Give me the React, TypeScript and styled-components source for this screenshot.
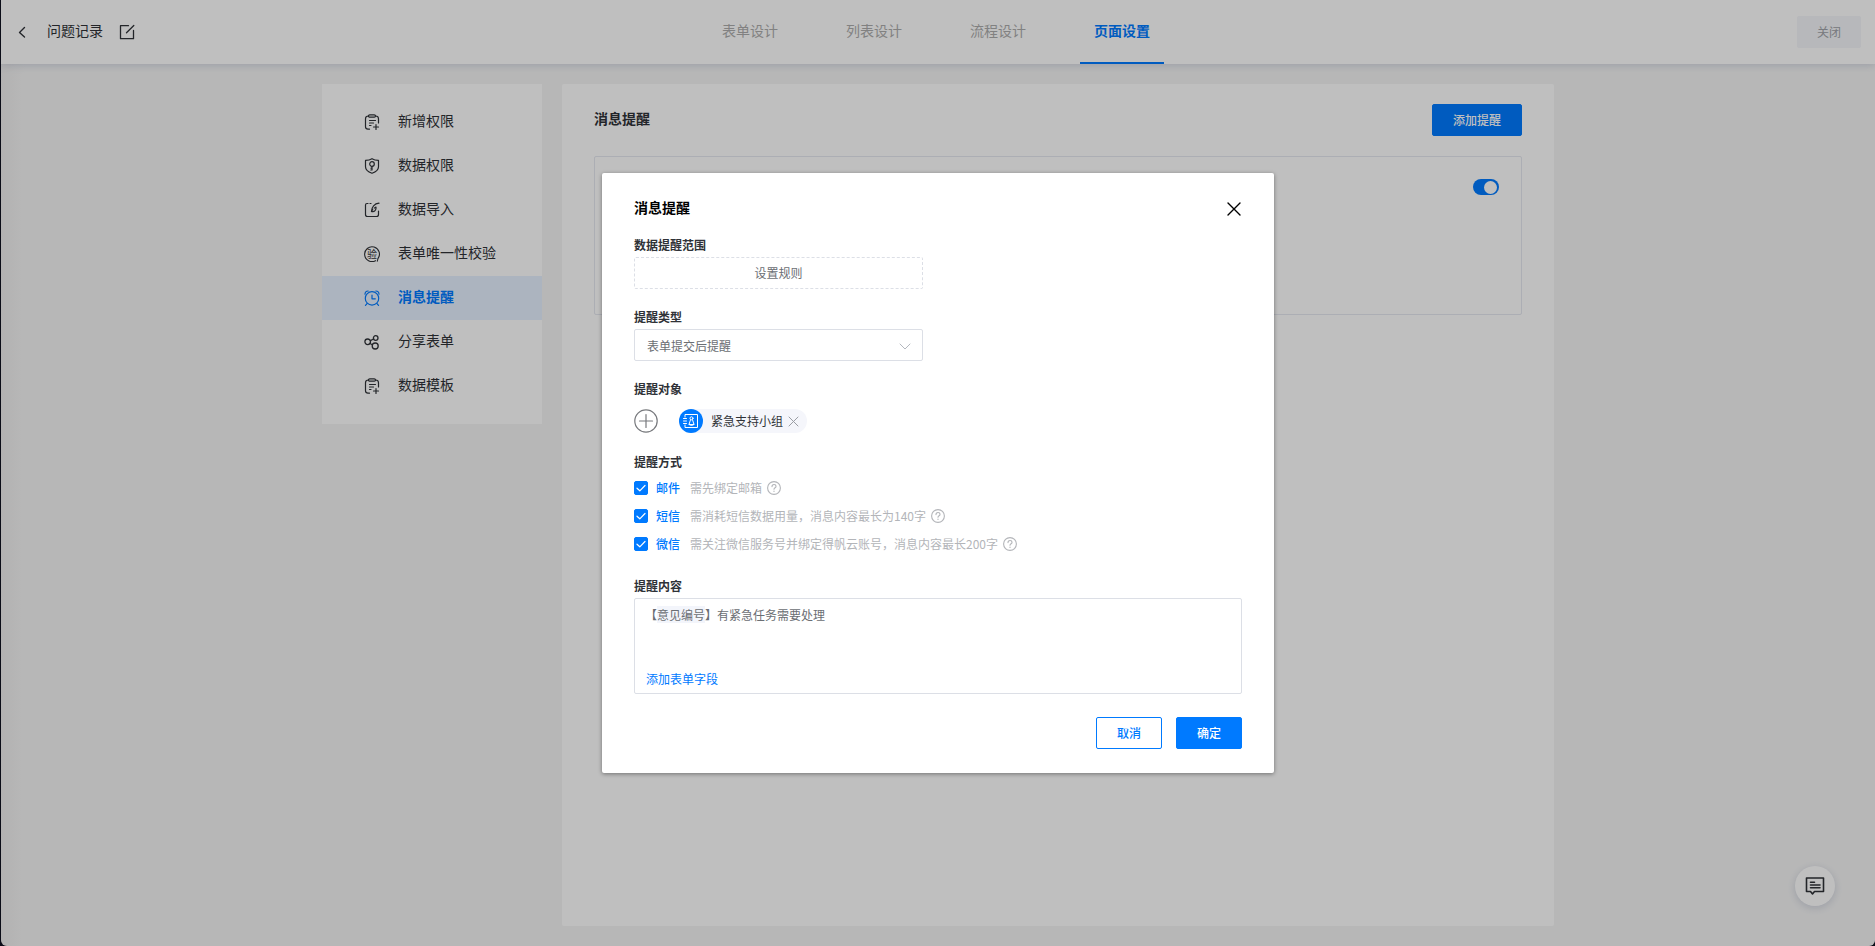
import React, { useState } from "react";
import styled, { createGlobalStyle, css } from "styled-components";

const GlobalStyle = createGlobalStyle`
  *, *::before, *::after { box-sizing: border-box; }
  body {
    margin: 0;
    background: #0b0d18;
    font-family: "Noto Sans CJK SC", sans-serif;
    font-size: 14px;
    color: #2f3237;
  }
  button, input, select { font-family: inherit; margin: 0; }
  h1, h2, h3, p { margin: 0; font-size: inherit; font-weight: inherit; }
`;

const blue = "#007aff";
const line = "#dcdfe6";

const Shell = styled.div`
  position: relative;
  display: flex;
  flex-direction: column;
  min-height: 100vh;
  margin-left: 1px;
  overflow: hidden;
  border-radius: 0 0 6px 6px;
  background: linear-gradient(90deg, #efeeee, #f5f5f5 24px);
`;

const Header = styled.header`
  display: grid;
  grid-template-columns: 1fr auto 1fr;
  height: 64px;
  padding: 0 14px 0 10px;
  background: #fff;
  box-shadow: 0 1px 8px rgba(60, 80, 130, 0.22);
`;

const HeaderLeft = styled.div`
  display: flex;
  align-items: center;
`;

const HeaderRight = styled(HeaderLeft)`
  justify-content: flex-end;
`;

const IconButton = styled.button<{ $size?: number }>`
  display: flex;
  align-items: center;
  justify-content: center;
  width: ${(p) => p.$size ?? 22}px;
  height: ${(p) => p.$size ?? 22}px;
  padding: 0;
  border: 0;
  background: none;
  color: inherit;
  cursor: pointer;
`;

const PageName = styled.h1`
  margin: 0 13px 0 14px;
  padding-bottom: 4px;
  line-height: 20px;
`;

const Tabs = styled.nav`
  display: flex;
  gap: 40px;
`;

const Tab = styled.a<{ $active?: boolean }>`
  display: flex;
  align-items: center;
  padding: 0 14px 2px;
  border-bottom: 2px solid ${(p) => (p.$active ? blue : "transparent")};
  color: ${(p) => (p.$active ? blue : "#adadad")};
  font-weight: ${(p) => (p.$active ? 700 : 400)};
  line-height: 20px;
  text-decoration: none;
`;

const Button = styled.button<{ $kind?: "primary" | "outline" | "muted"; $width: number }>`
  width: ${(p) => p.$width}px;
  height: 32px;
  padding: 0;
  border: 1px solid ${blue};
  border-radius: 2px;
  background: ${blue};
  color: #fff;
  font-size: 12px;
  font-weight: 500;
  line-height: 20px;
  cursor: pointer;
  ${(p) => p.$kind === "outline" && css`background: #fff; color: ${blue};`}
  ${(p) =>
    p.$kind === "muted" &&
    css`background: #f4f6fa; border-color: #f4f6fa; color: #a0a3a8; font-weight: 400;`}
`;

const Body = styled.div`
  flex: 1;
  display: flex;
  align-items: flex-start;
  gap: 20px;
  width: 100%;
  max-width: 1232px;
  margin: 0 auto;
  padding: 20px 0;
`;

const SideMenu = styled.nav`
  flex: none;
  width: 220px;
  padding: 16px 0;
  background: #fff;
`;

const SideItem = styled.a<{ $active?: boolean }>`
  display: flex;
  align-items: center;
  gap: 18px;
  height: 44px;
  padding-left: 42px;
  background: ${(p) => (p.$active ? "#e6f1ff" : "transparent")};
  color: ${(p) => (p.$active ? blue : "inherit")};
  font-weight: ${(p) => (p.$active ? 700 : 400)};
  text-decoration: none;
`;

const SideLabel = styled.span`
  padding-bottom: 4px;
  line-height: 20px;
`;

const Main = styled.main`
  flex: 1;
  align-self: stretch;
  padding: 20px 32px;
  border-radius: 2px;
  background: #fff;
`;

const MainHead = styled.div`
  display: flex;
  align-items: center;
  justify-content: space-between;
  margin-bottom: 20px;
`;

const MainTitle = styled.h2`
  padding-bottom: 4px;
  font-weight: 700;
  line-height: 20px;
`;

const ReminderCard = styled.section`
  display: flex;
  align-items: flex-start;
  justify-content: flex-end;
  height: 159px;
  padding: 22px;
  border: 1px solid #e6e8f0;
  border-radius: 2px;
`;

const Switch = styled.input`
  appearance: none;
  display: flex;
  align-items: center;
  width: 26px;
  height: 16px;
  padding: 0 2px;
  border-radius: 8px;
  background: #c4c7cc;
  cursor: pointer;
  &::before {
    content: "";
    width: 13px;
    height: 13px;
    border-radius: 50%;
    background: #fff;
  }
  &:checked { justify-content: flex-end; background: ${blue}; }
`;

const ChatButton = styled.button`
  position: absolute;
  right: 40px;
  bottom: 40px;
  display: flex;
  align-items: center;
  justify-content: center;
  width: 40px;
  height: 40px;
  padding: 0;
  border: 0;
  border-radius: 50%;
  background: #fff;
  box-shadow: 0 2px 8px rgba(60, 80, 130, 0.2);
  color: inherit;
`;

const Overlay = styled.div`
  position: absolute;
  inset: 0;
  display: flex;
  align-items: center;
  justify-content: center;
  background: rgba(0, 0, 0, 0.25);
`;

const Dialog = styled.form`
  width: 672px;
  padding: 24px 32px;
  border-radius: 2px;
  background: #fff;
  box-shadow: 0 1px 4px rgba(0, 0, 0, 0.4);
  font-size: 12px;
  line-height: 20px;
`;

const DialogHead = styled.div`
  display: flex;
  align-items: center;
  justify-content: space-between;
  height: 24px;
  margin-bottom: 14px;
  color: #000;
`;

const DialogTitle = styled.h2`
  padding-bottom: 4px;
  font-size: 14px;
  font-weight: 700;
  line-height: 20px;
`;

const Fields = styled.div`
  display: flex;
  flex-direction: column;
  gap: 18px;
`;

const Field = styled.div`
  display: flex;
  flex-direction: column;
  align-items: flex-start;
  gap: 2px;
`;

const FieldLabel = styled.label`
  font-weight: 700;
`;

const RuleButton = styled.button`
  width: 289px;
  height: 32px;
  padding: 0 0 2px;
  border: 1px dashed ${line};
  border-radius: 2px;
  background: #fff;
  color: #6b6e73;
  font-size: 12px;
  cursor: pointer;
`;

const SelectBox = styled.div`
  display: grid;
  align-items: center;
  width: 289px;
  height: 32px;
  > * { grid-area: 1 / 1; }
  > svg { justify-self: end; margin: 2px 12px 0 0; color: #b4b8bf; pointer-events: none; }
`;

const Select = styled.select`
  appearance: none;
  width: 100%;
  height: 32px;
  padding: 0 32px 0 12px;
  border: 1px solid ${line};
  border-radius: 2px;
  background: #fff;
  color: #6b6e73;
  font-size: 12px;
`;

const Targets = styled.div`
  display: flex;
  align-items: center;
  gap: 21px;
  padding: 8px 0 1px;
  color: #77797d;
`;

const Chip = styled.span`
  display: flex;
  align-items: center;
  gap: 5px;
  height: 24px;
  padding-right: 8px;
  border-radius: 12px;
  background: #f5f6fb;
  color: #2f3237;
  ${IconButton} { color: #9a9da3; }
`;

const Avatar = styled.span`
  display: flex;
  width: 24px;
  height: 24px;
  margin-right: 3px;
  border-radius: 50%;
  background: ${blue};
  color: #fff;
`;

const ChannelList = styled.div`
  display: flex;
  flex-direction: column;
`;

const Channel = styled.div`
  display: flex;
  align-items: center;
  height: 28px;
  color: #b3b5b9;
`;

const ChannelLabel = styled.label`
  display: flex;
  align-items: center;
  margin-right: 10px;
  color: ${blue};
  font-weight: 500;
`;

const CheckWrap = styled.span`
  display: grid;
  margin-right: 8px;
  > * { grid-area: 1 / 1; }
  > svg { color: #fff; pointer-events: none; }
`;

const Check = styled.input`
  appearance: none;
  width: 14px;
  height: 14px;
  border: 1px solid ${line};
  border-radius: 2px;
  background: #fff;
  &:checked { border-color: ${blue}; background: ${blue}; }
`;

const ChannelHint = styled.span`
  margin-right: 5px;
`;

const MessageBox = styled.div`
  display: flex;
  flex-direction: column;
  align-items: flex-start;
  justify-content: space-between;
  width: 100%;
  height: 96px;
  padding: 6px 10px 4px;
  border: 1px solid ${line};
  border-radius: 2px;
  color: #6b6e73;
`;

const Message = styled.div`
  width: 100%;
  outline: none;
`;

const FieldToken = styled.span`
  background: #f3f5fb;
`;

const TextLink = styled.a`
  padding-left: 1px;
  color: ${blue};
  text-decoration: none;
`;

const DialogFoot = styled.div`
  display: flex;
  justify-content: flex-end;
  gap: 14px;
  margin-top: 23px;
`;

const Svg = ({ size = 16, w = 1, children }: { size?: number; w?: number; children: React.ReactNode }) => (
  <svg width={size} height={size} viewBox={`0 0 ${size} ${size}`} fill="none" stroke="currentColor"
    strokeWidth={w} strokeLinecap="round" strokeLinejoin="round" aria-hidden="true">
    {children}
  </svg>
);

const ClipboardIcon = () => (
  <Svg w={1.2}>
    <path d="M4.5 2C2.5 2 1.5 3 1.5 4.8v8c0 1.6 1 2.4 2.5 2.4h1.500M11.500 2c2 0 3 1 3 2.800V9" />
    <rect x="4.5" y="0.8" width="7" height="2.4" rx="1.2" />
    <path d="M5.5 6.5h6M5.500 9h4M5.500 11.500h1.500M9.500 13h5M12 10.500v5" />
  </Svg>
);
const ShieldIcon = () => (
  <Svg w={1.2}>
    <path d="M8 .7c2 1.300 4.200 1.700 6.500 1.700v6.300c0 3.200-2.700 5.200-6.500 6.600-3.800-1.400-6.500-3.400-6.500-6.600V2.400C3.800 2.400 6 2 8 .7z" />
    <circle cx="8" cy="6" r="2.3" />
    <path d="M8 8.300V12M8 12H6.800M8 10.200H7" />
  </Svg>
);
const ImportIcon = () => (
  <Svg w={1.2}>
    <path d="M4 1.500H3Q1.500 1.500 1.500 3v9.500Q1.500 14.500 3.500 14.500h9Q14.500 14.500 14.500 12.500V9M6 1.500h1" />
    <path d="M15 1.200C10.500 1.500 7.500 5 7.500 9.500c3 .8 5-1.500 4.500-4.500l-1.500 1" />
    <path d="M7.500 9.500l1.300-2.500" />
  </Svg>
);
const VerifyIcon = () => (
  <Svg w={1.1}>
    <path d="M13.800 12.800A7.400 7.400 0 1 0 11.500 14.700M13.300 15.200l.6-2.400" />
    <text x="8" y="11.500" textAnchor="middle" fontSize="10" fill="currentColor" stroke="none">验</text>
  </Svg>
);
const AlarmIcon = () => (
  <Svg w={1.2}>
    <circle cx="8" cy="8.400" r="6.700" />
    <path d="M8 5v3.800h3.300M1 4.200Q1 1 4.200 1M15 4.200Q15 1 11.800 1M3 13.600l-1.500 1.800M13 13.600l1.500 1.800" />
  </Svg>
);
const ShareIcon = () => (
  <Svg w={1.3}>
    <circle cx="3.700" cy="7.800" r="2.800" />
    <circle cx="11.700" cy="4" r="2.300" />
    <circle cx="11.200" cy="12" r="3" />
    <path d="M6.300 6.700L9.600 5M6 9.500l2.400 1.300" />
  </Svg>
);
const HelpIcon = () => (
  <Svg size={14} w={1.1}>
    <circle cx="7" cy="7" r="6.400" />
    <path d="M5 5.600C5 4.300 5.900 3.500 7 3.500s2 .8 2 1.900C9 6.700 7 6.800 7 8.300M7 10v.4" />
  </Svg>
);

const menu = [
  { name: "新增权限", Icon: ClipboardIcon },
  { name: "数据权限", Icon: ShieldIcon },
  { name: "数据导入", Icon: ImportIcon },
  { name: "表单唯一性校验", Icon: VerifyIcon },
  { name: "消息提醒", Icon: AlarmIcon },
  { name: "分享表单", Icon: ShareIcon },
  { name: "数据模板", Icon: ClipboardIcon },
];

const channels = [
  { id: "mail", name: "邮件", hint: "需先绑定邮箱" },
  { id: "sms", name: "短信", hint: "需消耗短信数据用量，消息内容最长为140字" },
  { id: "wechat", name: "微信", hint: "需关注微信服务号并绑定得帆云账号，消息内容最长200字" },
];

const tabs = ["表单设计", "列表设计", "流程设计", "页面设置"];

export default function App() {
  const [on, setOn] = useState<Record<string, boolean>>({ mail: true, sms: true, wechat: true });

  return (
    <>
      <GlobalStyle />
      <Shell>
        <Header>
          <HeaderLeft>
            <IconButton type="button" aria-label="返回">
              <Svg size={12} w={1.4}><path d="M8.500 1.500L3.500 6.500l5 4.500" /></Svg>
            </IconButton>
            <PageName>问题记录</PageName>
            <IconButton type="button" aria-label="编辑">
              <Svg w={1.3}><path d="M9.500 1.700H1.500v13h13V6.500M7.500 8.800L14.800 1.500" /></Svg>
            </IconButton>
          </HeaderLeft>
          <Tabs>
            {tabs.map((t, i) => <Tab key={t} href="#" $active={i === 3}>{t}</Tab>)}
          </Tabs>
          <HeaderRight>
            <Button type="button" $kind="muted" $width={64}>关闭</Button>
          </HeaderRight>
        </Header>

        <Body>
          <SideMenu>
            {menu.map(({ name, Icon }) => (
              <SideItem key={name} href="#" $active={name === "消息提醒"}>
                <Icon />
                <SideLabel>{name}</SideLabel>
              </SideItem>
            ))}
          </SideMenu>
          <Main>
            <MainHead>
              <MainTitle>消息提醒</MainTitle>
              <Button type="button" $width={90}>添加提醒</Button>
            </MainHead>
            <ReminderCard>
              <Switch type="checkbox" role="switch" aria-label="启用提醒" defaultChecked />
            </ReminderCard>
          </Main>
        </Body>

        <ChatButton type="button" aria-label="反馈">
          <Svg size={20} w={1.6}>
            <path d="M1.500 2h17v13.500H9.500L7.500 18l-2-2.500h-4z" />
            <path d="M5.500 6.200h4M5.500 9h9.500M5.500 11.800h9.500" />
          </Svg>
        </ChatButton>

        <Overlay>
          <Dialog role="dialog" aria-labelledby="dialog-title" onSubmit={(e) => e.preventDefault()}>
            <DialogHead>
              <DialogTitle id="dialog-title">消息提醒</DialogTitle>
              <IconButton type="button" aria-label="关闭窗口" $size={16}>
                <Svg w={1.4}><path d="M2 2l12 12M14 2L2 14" /></Svg>
              </IconButton>
            </DialogHead>
            <Fields>
              <Field>
                <FieldLabel htmlFor="rule">数据提醒范围</FieldLabel>
                <RuleButton id="rule" type="button">设置规则</RuleButton>
              </Field>
              <Field>
                <FieldLabel htmlFor="kind">提醒类型</FieldLabel>
                <SelectBox>
                  <Select id="kind"><option>表单提交后提醒</option></Select>
                  <Svg size={12}><path d="M1 4l5 5 5-5" /></Svg>
                </SelectBox>
              </Field>
              <Field>
                <FieldLabel htmlFor="target">提醒对象</FieldLabel>
                <Targets>
                  <IconButton id="target" type="button" aria-label="添加提醒对象" $size={24}>
                    <Svg size={24} w={1.2}><circle cx="12" cy="12" r="11.200" /><path d="M12 5.500v13M5.500 12h13" /></Svg>
                  </IconButton>
                  <Chip>
                    <Avatar>
                      <Svg size={24}>
                        <path d="M6 8V5.500h12.500v13H6V16M4.500 9.500h3M4.500 12h3M4.500 14.500h3" />
                        <circle cx="12.500" cy="9.300" r="1.500" />
                        <path d="M11.500 10.800L10 15.500h5l-1.500-4.700M10 15.500l2.500 1 2.500-1" />
                      </Svg>
                    </Avatar>
                    紧急支持小组
                    <IconButton type="button" aria-label="移除紧急支持小组" $size={11}>
                      <Svg size={11}><path d="M1 1l9 9M10 1L1 10" /></Svg>
                    </IconButton>
                  </Chip>
                </Targets>
              </Field>
              <Field role="group" aria-labelledby="channels">
                <FieldLabel as="h3" id="channels">提醒方式</FieldLabel>
                <ChannelList>
                  {channels.map((c) => (
                    <Channel key={c.id}>
                      <ChannelLabel htmlFor={c.id}>
                        <CheckWrap>
                          <Check id={c.id} type="checkbox" checked={on[c.id]}
                            onChange={(e) => setOn({ ...on, [c.id]: e.target.checked })} />
                          <Svg size={14} w={1.2}><path d="M3 7.200l2.800 2.600L11 4.500" /></Svg>
                        </CheckWrap>
                        {c.name}
                      </ChannelLabel>
                      <ChannelHint>{c.hint}</ChannelHint>
                      <HelpIcon />
                    </Channel>
                  ))}
                </ChannelList>
              </Field>
              <Field>
                <FieldLabel as="h3" id="content">提醒内容</FieldLabel>
                <MessageBox>
                  <Message role="textbox" aria-multiline="true" aria-labelledby="content"
                    contentEditable suppressContentEditableWarning>
                    【<FieldToken>意见编号</FieldToken>】有紧急任务需要处理
                  </Message>
                  <TextLink href="#">添加表单字段</TextLink>
                </MessageBox>
              </Field>
            </Fields>
            <DialogFoot>
              <Button type="button" $kind="outline" $width={66}>取消</Button>
              <Button type="submit" $width={66}>确定</Button>
            </DialogFoot>
          </Dialog>
        </Overlay>
      </Shell>
    </>
  );
}
